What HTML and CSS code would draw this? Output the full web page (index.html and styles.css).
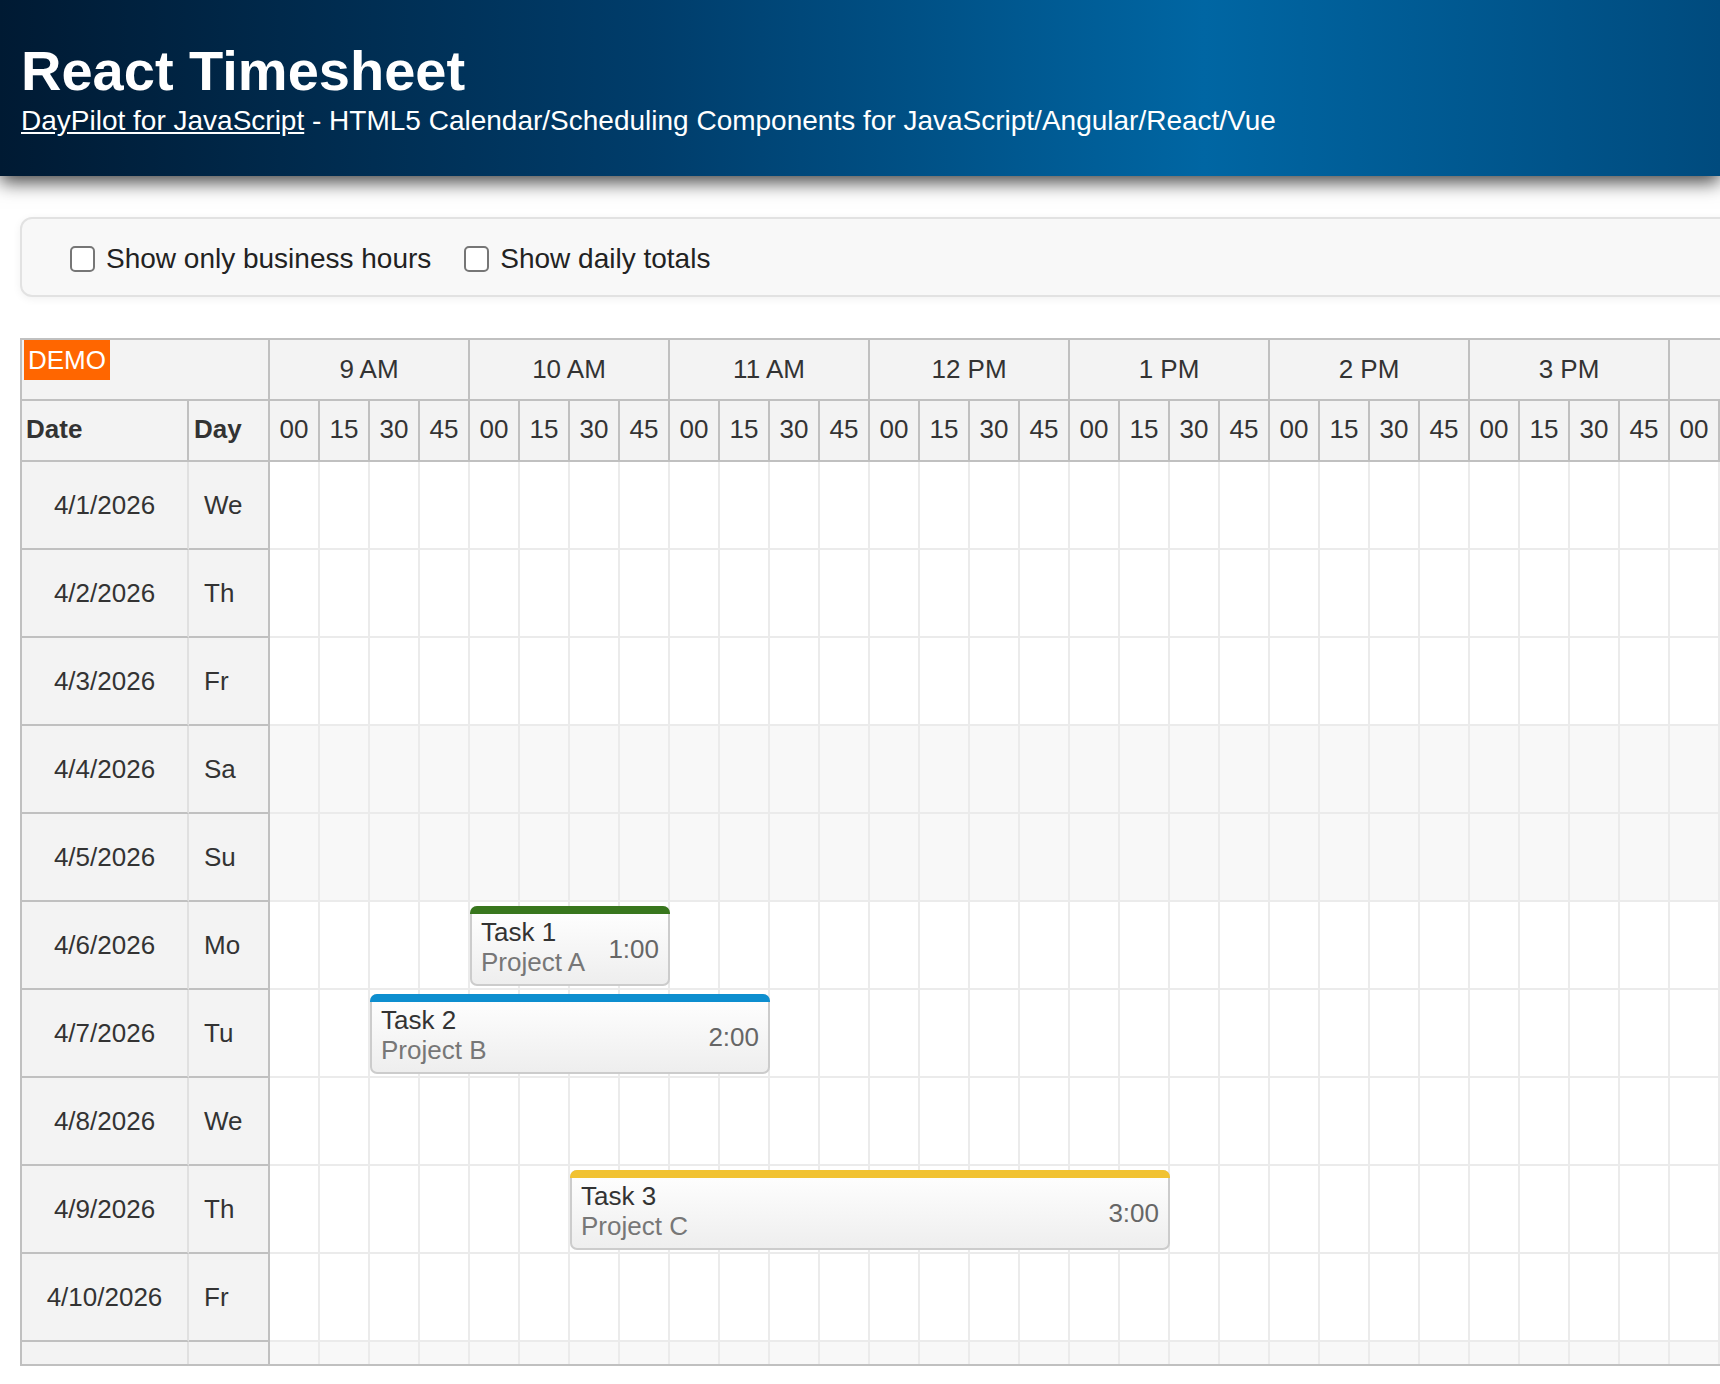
FILE: index.html
```html
<!DOCTYPE html>
<html lang="en">
<head>
<meta charset="utf-8">
<title>React Timesheet</title>
<link rel="stylesheet" href="styles.css">
</head>
<body>
<header class="page-header">
  <h1 class="title">React Timesheet</h1>
  <div class="subtitle"><a class="sub-link" href="#">DayPilot for JavaScript</a> - HTML5 Calendar/Scheduling Components for JavaScript/Angular/React/Vue</div>
</header>

<div class="toolbar">
  <label class="option"><input type="checkbox" class="check"><span>Show only business hours</span></label>
  <label class="option"><input type="checkbox" class="check"><span>Show daily totals</span></label>
</div>

<div class="sched">
  <div class="head-row1">
    <div class="corner"><span class="demo">DEMO</span></div>
    <div class="hour">9 AM</div>
    <div class="hour">10 AM</div>
    <div class="hour">11 AM</div>
    <div class="hour">12 PM</div>
    <div class="hour">1 PM</div>
    <div class="hour">2 PM</div>
    <div class="hour">3 PM</div>
    <div class="hour"></div>
  </div>
  <div class="head-row2">
    <div class="hcol hdate">Date</div>
    <div class="hcol hday">Day</div>
    <div class="min">00</div><div class="min">15</div><div class="min">30</div><div class="min">45</div>
    <div class="min">00</div><div class="min">15</div><div class="min">30</div><div class="min">45</div>
    <div class="min">00</div><div class="min">15</div><div class="min">30</div><div class="min">45</div>
    <div class="min">00</div><div class="min">15</div><div class="min">30</div><div class="min">45</div>
    <div class="min">00</div><div class="min">15</div><div class="min">30</div><div class="min">45</div>
    <div class="min">00</div><div class="min">15</div><div class="min">30</div><div class="min">45</div>
    <div class="min">00</div><div class="min">15</div><div class="min">30</div><div class="min">45</div>
    <div class="min">00</div><div class="min"></div><div class="min"></div><div class="min"></div>
  </div>
  <div class="body">
    <div class="row"><div class="rdate">4/1/2026</div><div class="rday">We</div><div class="grid"></div></div>
    <div class="row"><div class="rdate">4/2/2026</div><div class="rday">Th</div><div class="grid"></div></div>
    <div class="row"><div class="rdate">4/3/2026</div><div class="rday">Fr</div><div class="grid"></div></div>
    <div class="row"><div class="rdate">4/4/2026</div><div class="rday">Sa</div><div class="grid weekend"></div></div>
    <div class="row"><div class="rdate">4/5/2026</div><div class="rday">Su</div><div class="grid weekend"></div></div>
    <div class="row"><div class="rdate">4/6/2026</div><div class="rday">Mo</div>
      <div class="grid">
        <div class="event" style="left:200px;width:200px">
          <div class="bar bar-green"></div>
          <div class="ev-text"><div class="ev-name">Task 1</div><div class="ev-proj">Project A</div></div>
          <div class="ev-dur">1:00</div>
        </div>
      </div>
    </div>
    <div class="row"><div class="rdate">4/7/2026</div><div class="rday">Tu</div>
      <div class="grid">
        <div class="event" style="left:100px;width:400px">
          <div class="bar bar-blue"></div>
          <div class="ev-text"><div class="ev-name">Task 2</div><div class="ev-proj">Project B</div></div>
          <div class="ev-dur">2:00</div>
        </div>
      </div>
    </div>
    <div class="row"><div class="rdate">4/8/2026</div><div class="rday">We</div><div class="grid"></div></div>
    <div class="row"><div class="rdate">4/9/2026</div><div class="rday">Th</div>
      <div class="grid">
        <div class="event" style="left:300px;width:600px">
          <div class="bar bar-yellow"></div>
          <div class="ev-text"><div class="ev-name">Task 3</div><div class="ev-proj">Project C</div></div>
          <div class="ev-dur">3:00</div>
        </div>
      </div>
    </div>
    <div class="row"><div class="rdate">4/10/2026</div><div class="rday">Fr</div><div class="grid"></div></div>
    <div class="row"><div class="rdate"></div><div class="rday"></div><div class="grid weekend"></div></div>
  </div>
</div>
</body>
</html>
```

FILE: styles.css
```css
html, body {
  margin: 0;
  padding: 0;
  overflow: hidden;
  background: #ffffff;
}
body {
  font-family: "Liberation Sans", Arial, sans-serif;
  color: #333333;
}

.page-header {
  position: relative;
  z-index: 1;
  box-sizing: border-box;
  height: 176px;
  padding: 43px 21px 0 21px;
  background: linear-gradient(90deg, #001a33 0%, #003d6b 38%, #0066a3 70%, #004b7e 100%);
  box-shadow: 0 6px 18px rgba(0, 0, 0, 0.75);
  color: #ffffff;
}
.title {
  margin: 0;
  font-size: 56px;
  line-height: 56px;
  font-weight: bold;
}
.subtitle {
  margin-top: 8px;
  font-size: 28px;
  line-height: 28px;
}
.sub-link {
  color: #ffffff;
  text-decoration: underline;
}

.toolbar {
  box-sizing: border-box;
  height: 80px;
  margin: 41px -300px 0 20px;
  padding: 4px 0 0 48px;
  display: flex;
  align-items: center;
  gap: 33px;
  background: #f8f8f8;
  border: 2px solid #e2e2e2;
  border-radius: 12px;
  box-shadow: 0 2px 8px rgba(0, 0, 0, 0.06);
}
.option {
  display: flex;
  align-items: center;
  gap: 11px;
  font-size: 28px;
  color: #222222;
}
.check {
  appearance: none;
  -webkit-appearance: none;
  box-sizing: border-box;
  width: 25px;
  height: 26px;
  margin: 0;
  border: 2px solid #767676;
  border-radius: 5px;
  background: #ffffff;
}

.sched {
  margin: 41px 0 0 20px;
  border-top: 2px solid #c0c0c0;
  border-left: 2px solid #c0c0c0;
  border-bottom: 2px solid #c0c0c0;
  overflow: hidden;
  font-size: 26px;
  color: #333333;
}
.head-row1, .head-row2 {
  display: flex;
  box-sizing: border-box;
  height: 61px;
  background: #f3f3f3;
  border-bottom: 2px solid #c0c0c0;
}
.corner {
  position: relative;
  flex: 0 0 248px;
  box-sizing: border-box;
  border-right: 2px solid #c0c0c0;
}
.demo {
  position: absolute;
  left: 2px;
  top: 0;
  height: 40px;
  padding: 0 4px;
  line-height: 40px;
  background: #ff6600;
  color: #ffffff;
  font-size: 26px;
}
.hour {
  flex: 0 0 200px;
  box-sizing: border-box;
  border-right: 2px solid #c0c0c0;
  text-align: center;
  line-height: 59px;
}
.hcol {
  box-sizing: border-box;
  border-right: 2px solid #c0c0c0;
  font-weight: bold;
  line-height: 57px;
}
.hdate {
  flex: 0 0 167px;
  padding-left: 4px;
}
.hday {
  flex: 0 0 81px;
  padding-left: 5px;
}
.min {
  flex: 0 0 50px;
  box-sizing: border-box;
  border-right: 2px solid #c0c0c0;
  text-align: center;
  line-height: 57px;
}

.body {
  height: 902px;
  overflow: hidden;
}
.row {
  display: flex;
  height: 88px;
}
.rdate, .rday {
  box-sizing: border-box;
  background: #f3f3f3;
  border-bottom: 2px solid #c0c0c0;
  line-height: 86px;
}
.rdate {
  flex: 0 0 167px;
  text-align: center;
  border-right: 2px solid #e0e0e0;
}
.rday {
  flex: 0 0 81px;
  padding-left: 15px;
  border-right: 2px solid #c0c0c0;
}
.grid {
  position: relative;
  flex: 0 0 1800px;
  box-sizing: border-box;
  border-bottom: 2px solid #ebebeb;
  background-color: #ffffff;
  background-image: linear-gradient(to right, transparent 48px, #ebebeb 48px);
  background-size: 50px 100%;
}
.grid.weekend {
  background-color: #f8f8f8;
}

.event {
  position: absolute;
  top: 4px;
  height: 80px;
  box-sizing: border-box;
  padding: 0 9px;
  display: flex;
  align-items: center;
  justify-content: space-between;
  border: 2px solid #cccccc;
  border-radius: 7px;
  background: linear-gradient(to bottom, #ffffff 0%, #eeeeee 100%);
  font-size: 26px;
  line-height: 30px;
}
.bar {
  position: absolute;
  left: -2px;
  right: -2px;
  top: -2px;
  height: 8px;
  border-radius: 7px 7px 0 0;
}
.bar-green { background: #38761d; }
.bar-blue { background: #0d8ecf; }
.bar-yellow { background: #f1c232; }
.ev-text {
  padding-top: 2px;
}
.ev-name {
  color: #333333;
}
.ev-proj {
  color: #777777;
}
.ev-dur {
  padding-top: 5px;
  color: #666666;
}
```
